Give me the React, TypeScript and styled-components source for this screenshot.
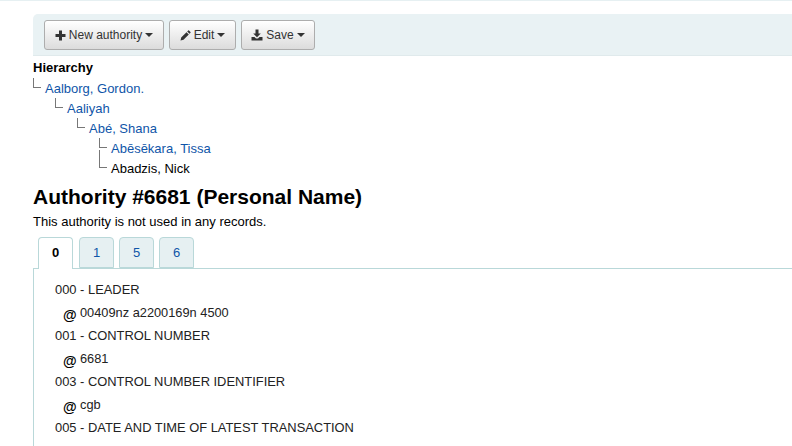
import React from 'react';
import styled, { createGlobalStyle } from 'styled-components';

const GlobalStyle = createGlobalStyle`
  html, body {
    margin: 0;
    padding: 0;
    height: 446px;
    overflow: hidden;
    background: #fff;
  }
  body {
    font-family: "Liberation Sans", Arial, sans-serif;
    font-size: 13px;
    color: #000;
  }
`;

const Page = styled.div`
  border-top: 1px solid #e6f0f2;
  padding: 13px 0 0 33px;
`;

const Toolbar = styled.div`
  display: flex;
  gap: 5px;
  height: 42px;
  box-sizing: border-box;
  padding: 6px 11px;
  background: #e9f2f4;
  border-radius: 5px 0 0 0;
  border-bottom: 1px solid #e0eaec;
`;

const ToolButton = styled.button`
  display: flex;
  align-items: center;
  justify-content: center;
  gap: 3px;
  height: 30px;
  box-sizing: border-box;
  width: ${p => p.$width}px;
  padding: 0;
  font: 12px "Liberation Sans", Arial, sans-serif;
  color: #333;
  background: linear-gradient(to bottom, #fff, #dcdcdc);
  border: 1px solid #adadad;
  border-radius: 3px;
  box-shadow: inset 0 1px 0 #fff;
`;

const Caret = styled.span`
  width: 0;
  height: 0;
  border-top: 4px solid #333;
  border-left: 4px solid transparent;
  border-right: 4px solid transparent;
`;

const Hierarchy = styled.div`
  margin-top: 2px;
`;

const HierarchyTitle = styled.div`
  font-weight: bold;
  line-height: 20px;
`;

const TreeRow = styled.div`
  position: relative;
  height: 20px;
  line-height: 21px;
  margin-left: ${p => p.$level * 22}px;
  padding-left: 12px;
  color: ${p => (p.$link ? '#0f55a8' : '#000')};

  &::before {
    content: '';
    position: absolute;
    left: 0;
    top: ${p => (p.$tall ? -8 : 0)}px;
    width: 7px;
    height: ${p => (p.$tall ? 17 : 9)}px;
    border-left: 1px solid #777;
    border-bottom: 1px solid #777;
  }
`;

const Heading = styled.h1`
  margin: 7px 0 0;
  font-size: 21px;
  line-height: 24px;
  font-weight: bold;
`;

const Note = styled.p`
  margin: 4px 0 0;
  line-height: 17px;
`;

const TabBar = styled.div`
  display: flex;
  gap: 5px;
  margin: 7px 0 0 5px;
  position: relative;
  z-index: 1;
`;

const Tab = styled.div`
  width: 35px;
  box-sizing: border-box;
  height: ${p => (p.$active ? 32 : 31)}px;
  margin-right: ${p => (p.$active ? 1 : 0)}px;
  margin-bottom: ${p => (p.$active ? -1 : 0)}px;
  line-height: 30px;
  text-align: center;
  font-weight: ${p => (p.$active ? 'bold' : 'normal')};
  color: ${p => (p.$active ? '#000' : '#0f55a8')};
  background: ${p => (p.$active ? '#fff' : '#e6f0f2')};
  border: 1px solid #b9d8d9;
  border-bottom: ${p => (p.$active ? 'none' : '1px solid #b9d8d9')};
  border-radius: 4px 4px 0 0;
`;

const TabPanel = styled.div`
  border-top: 1px solid #b9d8d9;
  border-left: 1px solid #b9d8d9;
  padding: 11px 0 0 21px;
  font-size: 12.9px;
  color: #222;
`;

const FieldTitle = styled.div`
  height: 23px;
  line-height: 20px;
`;

const SubField = styled.div`
  display: flex;
  height: 23px;
  line-height: 20px;
  padding-left: 8px;
  font-size: 12.8px;
`;

const SubCode = styled.b`
  width: 17px;
  font-size: 14px;
  color: #000;
  position: relative;
  top: 2px;
`;

const fields = [
  ['000 - LEADER', '00409nz a2200169n 4500'],
  ['001 - CONTROL NUMBER', '6681'],
  ['003 - CONTROL NUMBER IDENTIFIER', 'cgb'],
  ['005 - DATE AND TIME OF LATEST TRANSACTION', '20120727183413.0'],
];

const PlusIcon = () => (
  <svg width="11" height="11" viewBox="0 0 11 11">
    <path d="M4 0.500h3v3.500h3.500v3h-3.500v3.500h-3v-3.500h-3.500v-3h3.500z" fill="#333" />
  </svg>
);

const PencilIcon = () => (
  <svg width="11" height="11" viewBox="0 0 11 11">
    <path d="M0.500 10.500l0.700-3 5.300-5.300 2.300 2.300-5.300 5.300zM7.200 1.500l1-1q0.400-0.300 0.800 0l1.500 1.500q0.300 0.400 0 0.800l-1 1z" fill="#333" />
  </svg>
);

const DownloadIcon = () => (
  <svg width="12" height="12" viewBox="0 0 12 12">
    <path d="M4.500 0.500h3v4h2.300l-3.800 3.800-3.800-3.800h2.300zM0.500 8h3l1.500 1.500h2l1.500-1.500h3v3.500h-11z" fill="#333" />
  </svg>
);

export default function App() {
  return (
    <>
      <GlobalStyle />
      <Page>
        <Toolbar>
          <ToolButton $width={120}><PlusIcon />New authority<Caret /></ToolButton>
          <ToolButton $width={67}><PencilIcon />Edit<Caret /></ToolButton>
          <ToolButton $width={74}><DownloadIcon />Save<Caret /></ToolButton>
        </Toolbar>
        <Hierarchy>
          <HierarchyTitle>Hierarchy</HierarchyTitle>
          <TreeRow $level={0} $link>Aalborg, Gordon.</TreeRow>
          <TreeRow $level={1} $link>Aaliyah</TreeRow>
          <TreeRow $level={2} $link>Abé, Shana</TreeRow>
          <TreeRow $level={3} $link>Abēsēkara, Tissa</TreeRow>
          <TreeRow $level={3} $tall>Abadzis, Nick</TreeRow>
        </Hierarchy>
        <Heading>Authority #6681 (Personal Name)</Heading>
        <Note>This authority is not used in any records.</Note>
        <TabBar>
          <Tab $active>0</Tab>
          <Tab>1</Tab>
          <Tab>5</Tab>
          <Tab>6</Tab>
        </TabBar>
        <TabPanel>
          {fields.map(([title, value]) => (
            <React.Fragment key={title}>
              <FieldTitle>{title}</FieldTitle>
              <SubField><SubCode>@</SubCode>{value}</SubField>
            </React.Fragment>
          ))}
        </TabPanel>
      </Page>
    </>
  );
}
